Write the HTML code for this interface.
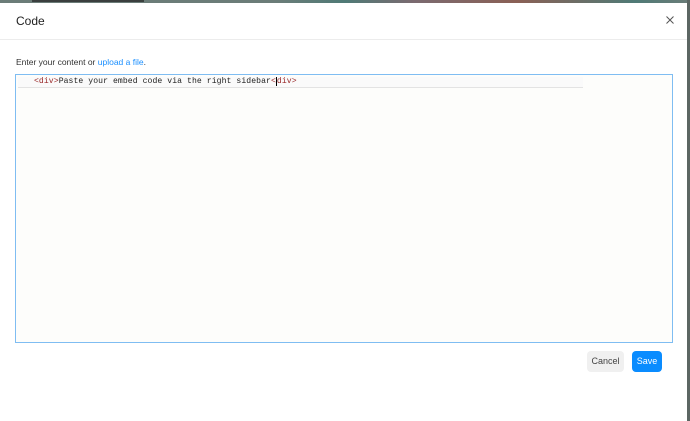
<!DOCTYPE html>
<html><head><style>
body{margin:0;width:690px;height:421px;overflow:hidden;background:#fff;font-family:"Liberation Sans",sans-serif;position:relative}
.top{position:absolute;left:0;top:0;width:690px;height:3px;background:linear-gradient(90deg,#6b7c78 0,#6b7c78 40%,#4f7a76 50%,#7b6a70 60%,#8a6055 75%,#4f7a76 92%,#6b7c78 100%)}
.bar{position:absolute;left:32px;top:0;width:112px;height:2px;background:#3a3f3e}
.right{position:absolute;right:0;top:0;width:3px;height:421px;background:#5c6663}
.title{position:absolute;left:16px;top:14px;font-size:12px;color:#222}
.x{position:absolute;left:666px;top:16px}
.hr{position:absolute;left:0;top:39px;width:687px;height:1px;background:#ececec}
.lbl{position:absolute;left:16px;top:57px;font-size:8.5px;color:#333}
.lbl a{color:#1a8fff;text-decoration:none}
.ed{position:absolute;left:15px;top:74px;width:656px;height:267px;border:1px solid #7fbdf2;background:#fdfdfb}
.line{position:absolute;left:2px;top:2px;width:565px;height:10px;border-bottom:1px solid #e3e3e3;background:#fafafa}
.code{position:absolute;left:18px;top:2px;font-family:"Liberation Mono",monospace;font-size:8.1px;letter-spacing:0.08px;color:#222;white-space:pre}
.code .t{color:#9a2a2a}
.btn{position:absolute;top:351px;height:21px;border-radius:4px;font-size:9px;line-height:21px;text-align:center}
.cancel{left:587px;width:37px;background:#f0f0f0;color:#444}
.save{left:632px;width:30px;background:#0a8cff;color:#fff}
</style></head><body>
<div class="top"></div><div class="bar"></div><div class="right"></div>
<div class="title">Code</div>
<svg class="x" width="8" height="8" viewBox="0 0 8 8"><path d="M0.5 0.5L7.5 7.5M7.5 0.5L0.5 7.5" stroke="#555" stroke-width="1"/></svg>
<div class="hr"></div>
<div class="lbl">Enter your content or <a>upload a file</a>.</div>
<div class="ed"><div class="line"></div><div class="code"><span class="t">&lt;div&gt;</span>Paste your embed code via the right sidebar<span class="t">&lt;</span><b style="border-left:1.5px solid #000"></b><span class="t">div&gt;</span></div></div>
<div class="btn cancel">Cancel</div>
<div class="btn save">Save</div>
</body></html>
